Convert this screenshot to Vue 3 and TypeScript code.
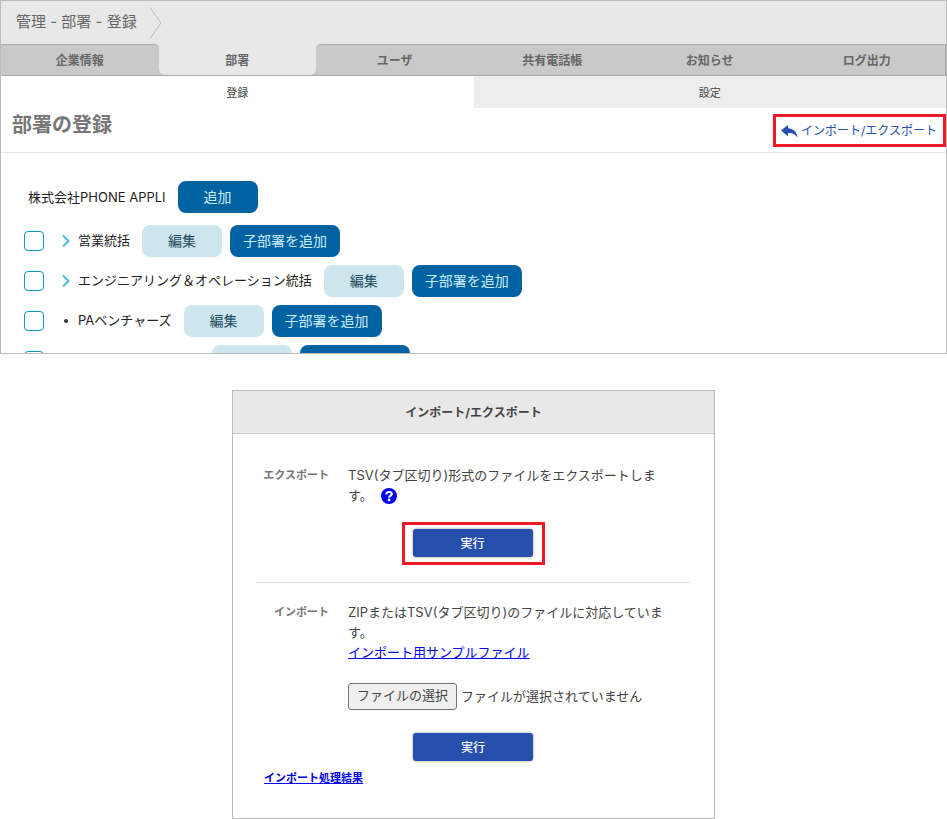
<script setup lang="ts">
import { ref } from 'vue'

interface Department {
  id: number
  name: string
  hasChildren: boolean
  checked: boolean
  nameWidth?: number
}

const crumbs = '管理 - 部署 - 登録'
const tabs: string[] = ['企業情報', '部署', 'ユーザ', '共有電話帳', 'お知らせ', 'ログ出力']
const activeTab = ref(1)
const subTabs: string[] = ['登録', '設定']
const activeSubTab = ref(0)

const departments = ref<Department[]>([
  { id: 1, name: '営業統括', hasChildren: true, checked: false },
  { id: 2, name: 'エンジニアリング＆オペレーション統括', hasChildren: true, checked: false },
  { id: 3, name: 'PAベンチャーズ', hasChildren: false, checked: false },
  { id: 4, name: '', hasChildren: false, checked: false, nameWidth: 122 },
])

const fileName = ref('ファイルが選択されていません')

function onFileChange(event: Event): void {
  const files = (event.target as HTMLInputElement).files
  fileName.value = files && files.length > 0 ? files[0].name : 'ファイルが選択されていません'
}
</script>

<template>
  <div class="page">
    <main class="panel">
      <header class="crumbs">
        <span>{{ crumbs }}</span>
        <svg class="crumb-arrow" viewBox="0 0 13 32" aria-hidden="true">
          <path d="M1 0.5 L12 16 L1 31.5" fill="none" stroke="#b8b8b8" stroke-width="1" />
        </svg>
      </header>

      <nav class="tabs">
        <div
          v-for="(tab, i) in tabs"
          :key="tab"
          class="tab"
          :class="{ active: i === activeTab, before: i === activeTab - 1, after: i === activeTab + 1 }"
        >
          <a href="#" @click.prevent="activeTab = i">{{ tab }}</a>
        </div>
      </nav>

      <nav class="subtabs">
        <a
          v-for="(sub, i) in subTabs"
          :key="sub"
          href="#"
          :class="{ active: i === activeSubTab }"
          @click.prevent="activeSubTab = i"
        >{{ sub }}</a>
      </nav>

      <div class="title-row">
        <h1>部署の登録</h1>
        <div class="highlight link-highlight">
          <a class="io-link" href="#transfer">
            <svg viewBox="0 0 17 13" aria-hidden="true">
              <path
                d="M7 0 L0 5.6 L7 11.2 V8 C11.5 7.8 14 9 16.4 12.8 C16.2 7.4 13 3.6 7 3.2 Z"
                fill="#2650ab"
              />
            </svg>
            <span>インポート/エクスポート</span>
          </a>
        </div>
      </div>

      <section class="tree">
        <div class="root">
          <span>株式会社PHONE APPLI</span>
          <button type="button" class="btn primary short">追加</button>
        </div>
        <ul>
          <li v-for="dept in departments" :key="dept.id">
            <input
              :id="`dept-${dept.id}`"
              v-model="dept.checked"
              type="checkbox"
              :aria-label="dept.name || '部署'"
            />
            <span class="marker">
              <svg v-if="dept.hasChildren" class="chevron" viewBox="0 0 8 14" aria-hidden="true">
                <path d="M1 1.5 L6.5 7 L1 12.5" fill="none" stroke="#56bde5" stroke-width="2.2" />
              </svg>
              <span v-else class="dot"></span>
            </span>
            <label
              :for="`dept-${dept.id}`"
              :style="dept.nameWidth ? { width: `${dept.nameWidth}px` } : undefined"
            >{{ dept.name }}</label>
            <button type="button" class="btn soft short">編集</button>
            <button type="button" class="btn primary wide">子部署を追加</button>
          </li>
        </ul>
      </section>
    </main>

    <section id="transfer" class="dialog">
      <h2>インポート/エクスポート</h2>
      <div class="block">
        <div class="row">
          <h3>エクスポート</h3>
          <p>
            TSV(タブ区切り)形式のファイルをエクスポートします。<a href="#" class="help" aria-label="ヘルプ"><svg viewBox="0 0 16 16" aria-hidden="true">
              <circle cx="8" cy="8" r="8" fill="#0000f5" />
              <path
                d="M5.3 6.3 C5.5 4.6 6.6 4 8.1 4 C9.7 4 10.8 4.8 10.8 6.1 C10.8 7.7 8.2 7.6 8.1 9.6"
                fill="none"
                stroke="#fff"
                stroke-width="2.2"
              />
              <circle cx="8.1" cy="12" r="1.4" fill="#fff" />
            </svg></a>
          </p>
        </div>
        <div class="highlight run-highlight">
          <button type="button" class="run">実行</button>
        </div>
      </div>
      <div class="block import">
        <div class="row">
          <h3>インポート</h3>
          <div>
            <p>
              ZIPまたはTSV(タブ区切り)のファイルに対応しています。
            </p>
            <a class="sample" href="#">インポート用サンプルファイル</a>
            <div class="file">
              <input id="import-file" type="file" @change="onFileChange" />
              <label for="import-file">ファイルの選択</label>
              <span>{{ fileName }}</span>
            </div>
          </div>
        </div>
        <button type="button" class="run">実行</button>
        <a class="result" href="#">インポート処理結果</a>
      </div>
    </section>
  </div>
</template>

<style>
body {
  margin: 0;
  background: #fff;
}
</style>

<style scoped>
.page {
  font-family: Inter, "Noto Sans CJK JP", sans-serif;
  font-size: 13px;
  line-height: 20px;
  color: #333;
}

.page *,
.page *::before {
  box-sizing: border-box;
}

h1,
h2,
h3,
p,
ul {
  margin: 0;
  padding: 0;
}

button {
  border: 0;
  font-family: inherit;
  cursor: pointer;
}

.panel {
  border: 1px solid #bbb;
}

.crumbs {
  display: flex;
  align-items: center;
  gap: 12px;
  height: 43px;
  padding-left: 15px;
  background: #e8e8e8;
  color: #666;
  font-size: 15px;
}

.crumbs span {
  padding-bottom: 2px;
}

.crumb-arrow {
  width: 13px;
  height: 32px;
}

.tabs {
  display: grid;
  grid-template-columns: repeat(6, 1fr);
  height: 32px;
  border-bottom: 1px solid #aaa;
  background: #e8e8e8;
}

.tab a {
  display: flex;
  align-items: center;
  justify-content: center;
  height: 31px;
  padding-top: 2px;
  border-top: 1px solid #aaa;
  background: #c9c9c9;
  color: #666;
  font-size: 12px;
  font-weight: 700;
  text-decoration: none;
}

.tab.before a {
  border-top-right-radius: 5px;
}

.tab.after a {
  border-top-left-radius: 5px;
}

.tab:last-child a {
  border-right: 1px solid #aaa;
}

.tab.active {
  background: linear-gradient(to bottom, #e8e8e8 50%, #c9c9c9 50%);
}

.tab.active a {
  border-top-color: #e8e8e8;
  border-radius: 0 0 6px 6px;
  background: #e8e8e8;
}

.subtabs {
  display: grid;
  grid-template-columns: 1fr 1fr;
  height: 32px;
}

.subtabs a {
  display: flex;
  align-items: center;
  justify-content: center;
  padding-top: 2px;
  background: #ededed;
  color: #444;
  font-size: 11px;
  text-decoration: none;
}

.subtabs a.active {
  background: #fff;
}

.title-row {
  display: flex;
  justify-content: space-between;
  align-items: flex-start;
  height: 45px;
  border-bottom: 1px solid #e5e5e5;
}

h1 {
  padding: 5px 0 0 11px;
  color: #777;
  font-size: 20px;
  line-height: 24px;
}

.highlight {
  border: 3px solid #ed1c24;
}

.link-highlight {
  margin-top: 6px;
  padding: 4px 6px 3px 5px;
}

.io-link {
  display: flex;
  align-items: center;
  gap: 3px;
  color: #2650ab;
  font-size: 12px;
  text-decoration: none;
}

.io-link svg {
  width: 17px;
  height: 13px;
}

.tree {
  height: 200px;
  padding-top: 28px;
  overflow: hidden;
  color: #222;
}

.root {
  display: flex;
  align-items: center;
  gap: 12px;
  padding-left: 27px;
}

.tree ul {
  display: grid;
  gap: 8px;
  margin-top: 12px;
  list-style: none;
}

.tree li {
  display: flex;
  align-items: center;
  padding-left: 23px;
}

.tree label {
  padding-bottom: 2px;
}

.tree input {
  width: 20px;
  height: 20px;
  margin: 0;
  border: 1px solid #0a9bbd;
  border-radius: 4px;
  background: #fff;
  appearance: none;
}

.tree input:checked {
  background: #0a9bbd;
}

.marker {
  display: flex;
  align-items: center;
  justify-content: center;
  width: 10px;
  margin: 0 7px 0 17px;
}

.chevron {
  width: 8px;
  height: 14px;
}

.dot {
  width: 4px;
  height: 4px;
  border-radius: 50%;
  background: #333;
}

.tree li .btn {
  margin-left: 12px;
}

.tree li .btn + .btn {
  margin-left: 8px;
}

.btn {
  height: 32px;
  padding: 0 0 2px;
  border-radius: 8px;
  font-size: 14px;
}

.short {
  width: 80px;
}

.wide {
  width: 110px;
}

.primary {
  background: #0062a0;
  color: #c8ecff;
}

.soft {
  background: #cde6ed;
  color: #1d4a5a;
}

.dialog {
  max-width: 483px;
  box-sizing: border-box;
  margin: 36px auto 0;
  border: 1px solid #bbb;
  color: #444;
}

h2 {
  height: 43px;
  border-bottom: 1px solid #ccc;
  background: #e8e8e8;
  font-size: 12px;
  line-height: 44px;
  text-align: center;
}

.block {
  display: flex;
  flex-direction: column;
  align-items: center;
  margin: 0 24px 0 23px;
  padding: 31px 0 17px;
}

.import {
  padding: 19px 0 30px;
  border-top: 1px solid #ddd;
}

.row {
  display: grid;
  grid-template-columns: 73px 1fr;
  gap: 19px;
  width: 100%;
  padding-right: 24px;
}

h3 {
  color: #777;
  font-size: 11px;
  line-height: 20px;
  text-align: right;
  white-space: nowrap;
}

.help {
  display: inline-block;
  width: 16px;
  height: 16px;
  margin-left: 8px;
  vertical-align: middle;
}

.help svg {
  display: block;
}

.run-highlight {
  margin-top: 17px;
  padding: 4px 9px 5px 8px;
}

.run {
  display: block;
  width: 120px;
  height: 28px;
  padding: 0 0 2px;
  border-radius: 3px;
  background: #2650ab;
  box-shadow: 0 0 3px rgba(0, 0, 0, 0.4);
  color: #fff;
  font-size: 12px;
  font-weight: 500;
}

.import .run {
  margin-top: 23px;
}

.sample,
.result {
  color: #0000ee;
}

.sample {
  display: block;
}

.file {
  display: flex;
  align-items: center;
  gap: 4px;
  margin-top: 21px;
  white-space: nowrap;
}

.file input {
  position: absolute;
  width: 1px;
  height: 1px;
  opacity: 0;
}

.file label {
  padding: 0 8px 2px;
  border: 1px solid #767676;
  border-radius: 3px;
  background: #efefef;
  line-height: 23px;
  cursor: pointer;
}

.file span {
  padding-bottom: 2px;
}

.result {
  align-self: flex-start;
  margin: 7px 0 0 8px;
  font-size: 11px;
  font-weight: 700;
}
</style>
